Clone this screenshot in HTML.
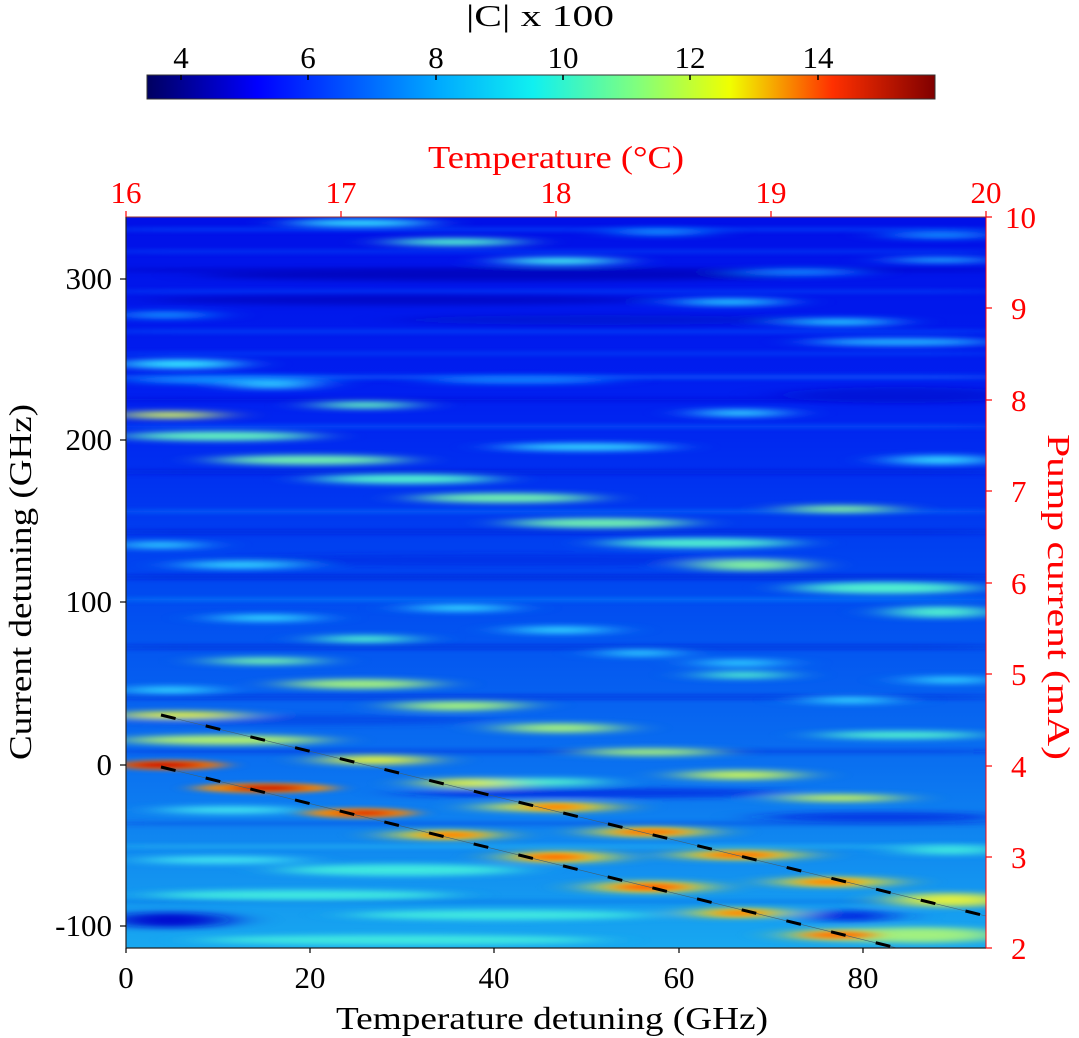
<!DOCTYPE html>
<html><head><meta charset="utf-8"><style>
html,body{margin:0;padding:0;background:#fff;width:1079px;height:1038px;overflow:hidden}
svg{display:block}
text{font-family:"Liberation Serif",serif}
</style></head><body>
<svg width="1079" height="1038" viewBox="0 0 1079 1038" xmlns="http://www.w3.org/2000/svg">
<defs>
<linearGradient id="jet" x1="0" x2="1" y1="0" y2="0">
<stop offset="0" stop-color="#000060"/>
<stop offset="0.14" stop-color="#0000ff"/>
<stop offset="0.37" stop-color="#00aaff"/>
<stop offset="0.49" stop-color="#10f0f0"/>
<stop offset="0.62" stop-color="#7fff7f"/>
<stop offset="0.74" stop-color="#f0ff00"/>
<stop offset="0.87" stop-color="#ff3000"/>
<stop offset="1" stop-color="#800000"/>
</linearGradient>
<linearGradient id="bg" x1="0" x2="0" y1="0" y2="1">
<stop offset="0" stop-color="#0010e8"/>
<stop offset="0.25" stop-color="#0020f0"/>
<stop offset="0.5" stop-color="#0048f0"/>
<stop offset="0.75" stop-color="#0a70f0"/>
<stop offset="1" stop-color="#18a8f0"/>
</linearGradient>
<clipPath id="cp"><rect x="126" y="217" width="860" height="731"/></clipPath>
<filter id="bl" x="-30%" y="-30%" width="160%" height="160%"><feGaussianBlur stdDeviation="24 3"/></filter>
<filter id="bl2" x="-20%" y="-20%" width="140%" height="140%"><feGaussianBlur stdDeviation="12 2"/></filter>
<filter id="bl3" x="-10%" y="-50%" width="120%" height="200%"><feGaussianBlur stdDeviation="40 2"/></filter>
</defs>

<rect x="147" y="75" width="788" height="24" fill="url(#jet)" stroke="#333" stroke-width="1"/>
<g stroke="#000" stroke-width="1.5">
<line x1="181" y1="75" x2="181" y2="80"/><line x1="308" y1="75" x2="308" y2="80"/><line x1="436" y1="75" x2="436" y2="80"/><line x1="563" y1="75" x2="563" y2="80"/><line x1="690" y1="75" x2="690" y2="80"/><line x1="818" y1="75" x2="818" y2="80"/>
</g>
<g font-size="31" text-anchor="middle" fill="#000">
<text x="181" y="68">4</text><text x="308" y="68">6</text><text x="436" y="68">8</text><text x="563" y="68">10</text><text x="690" y="68">12</text><text x="818" y="68">14</text>
<text x="540" y="26" textLength="148" lengthAdjust="spacingAndGlyphs">|C| x 100</text>
</g>

<g clip-path="url(#cp)">
<rect x="126" y="217" width="860" height="731" fill="url(#bg)"/>
<g filter="url(#bl3)">
<rect x="100" y="228" width="900" height="3" fill="#0a60ff" opacity="0.6"/>
<rect x="100" y="250" width="900" height="3" fill="#0a60ff" opacity="0.5"/>
<rect x="100" y="268" width="900" height="4" fill="#000ac0" opacity="0.5"/>
<rect x="100" y="290" width="900" height="3" fill="#0a60ff" opacity="0.5"/>
<rect x="100" y="330" width="900" height="3" fill="#0a60ff" opacity="0.6"/>
<rect x="100" y="352" width="900" height="3" fill="#0a60ff" opacity="0.5"/>
<rect x="100" y="375" width="900" height="4" fill="#1080ff" opacity="0.5"/>
<rect x="100" y="398" width="900" height="3" fill="#0010d0" opacity="0.5"/>
<rect x="100" y="425" width="900" height="3" fill="#1080ff" opacity="0.5"/>
<rect x="100" y="470" width="900" height="4" fill="#0010d0" opacity="0.5"/>
<rect x="100" y="510" width="900" height="3" fill="#1090ff" opacity="0.5"/>
<rect x="100" y="530" width="900" height="4" fill="#0010d0" opacity="0.5"/>
<rect x="100" y="575" width="900" height="4" fill="#0010d0" opacity="0.6"/>
<rect x="100" y="598" width="900" height="3" fill="#10a0ff" opacity="0.5"/>
<rect x="100" y="645" width="900" height="4" fill="#0010d0" opacity="0.5"/>
<rect x="100" y="695" width="900" height="4" fill="#0018d8" opacity="0.5"/>
<rect x="100" y="750" width="900" height="3" fill="#0020e0" opacity="0.6"/>
<rect x="100" y="822" width="900" height="3" fill="#0030e0" opacity="0.5"/>
<rect x="100" y="845" width="900" height="3" fill="#30d0f0" opacity="0.5"/>
<rect x="100" y="900" width="900" height="3" fill="#0060e8" opacity="0.5"/>
</g>
<g filter="url(#bl)">
<ellipse cx="500" cy="275" rx="300" ry="6" fill="#0008b0" opacity="0.7"/>
<ellipse cx="400" cy="300" rx="250" ry="5" fill="#0008b0" opacity="0.6"/>
<ellipse cx="600" cy="320" rx="200" ry="5" fill="#0010c0" opacity="0.5"/>
<ellipse cx="900" cy="395" rx="120" ry="8" fill="#0010d0" opacity="0.7"/>
<ellipse cx="170" cy="920" rx="60" ry="8" fill="#0010d0"/>
<ellipse cx="850" cy="916" rx="40" ry="6" fill="#0020e0"/>
<ellipse cx="600" cy="793" rx="200" ry="5" fill="#0020e0" opacity="0.7"/>
<ellipse cx="880" cy="817" rx="120" ry="5" fill="#0020e0" opacity="0.7"/>
<ellipse cx="500" cy="560" rx="300" ry="6" fill="#0020e0" opacity="0.5"/>
<ellipse cx="300" cy="720" rx="200" ry="5" fill="#0030e0" opacity="0.5"/>
<ellipse cx="360" cy="223" rx="70" ry="4" fill="#30e0ff"/>
<ellipse cx="455" cy="242" rx="66" ry="4" fill="#50f0d0"/>
<ellipse cx="560" cy="261" rx="60" ry="4" fill="#40e8f0"/>
<ellipse cx="660" cy="232" rx="45" ry="4" fill="#1090ff"/>
<ellipse cx="730" cy="302" rx="55" ry="4" fill="#20c0ff"/>
<ellipse cx="840" cy="322" rx="55" ry="4" fill="#20c0ff"/>
<ellipse cx="900" cy="342" rx="90" ry="4" fill="#20b0ff"/>
<ellipse cx="180" cy="364" rx="60" ry="5" fill="#30e0ff"/>
<ellipse cx="165" cy="315" rx="45" ry="4" fill="#1090ff"/>
<ellipse cx="940" cy="235" rx="50" ry="4" fill="#1090ff"/>
<ellipse cx="800" cy="272" rx="60" ry="4" fill="#1080ff"/>
<ellipse cx="230" cy="380" rx="100" ry="4" fill="#1090ff"/>
<ellipse cx="940" cy="260" rx="50" ry="3" fill="#20b0ff"/>
<ellipse cx="520" cy="380" rx="90" ry="4" fill="#1080ff"/>
<ellipse cx="272" cy="385" rx="40" ry="4" fill="#30d0ff"/>
<ellipse cx="365" cy="405" rx="48" ry="4" fill="#60f0c0"/>
<ellipse cx="170" cy="415" rx="50" ry="4" fill="#d0f060"/>
<ellipse cx="220" cy="436" rx="95" ry="5" fill="#60f0c0"/>
<ellipse cx="740" cy="413" rx="45" ry="4" fill="#30d0ff"/>
<ellipse cx="585" cy="447" rx="85" ry="4" fill="#30d0ff"/>
<ellipse cx="310" cy="460" rx="95" ry="5" fill="#70f0b0"/>
<ellipse cx="940" cy="460" rx="50" ry="5" fill="#30d0ff"/>
<ellipse cx="405" cy="479" rx="90" ry="5" fill="#50f0d0"/>
<ellipse cx="505" cy="498" rx="90" ry="5" fill="#70f0b0"/>
<ellipse cx="840" cy="509" rx="55" ry="4" fill="#80f0a0"/>
<ellipse cx="600" cy="523" rx="90" ry="5" fill="#70f0b0"/>
<ellipse cx="700" cy="543" rx="95" ry="5" fill="#50f0d0"/>
<ellipse cx="160" cy="545" rx="40" ry="4" fill="#30d0ff"/>
<ellipse cx="750" cy="565" rx="55" ry="6" fill="#80f0a0"/>
<ellipse cx="240" cy="565" rx="60" ry="4" fill="#30d0ff"/>
<ellipse cx="885" cy="588" rx="90" ry="6" fill="#50f0d0"/>
<ellipse cx="460" cy="608" rx="50" ry="4" fill="#30d0ff"/>
<ellipse cx="940" cy="612" rx="50" ry="6" fill="#50f0d0"/>
<ellipse cx="265" cy="618" rx="52" ry="4" fill="#30d0ff"/>
<ellipse cx="560" cy="630" rx="50" ry="4" fill="#30d0ff"/>
<ellipse cx="365" cy="639" rx="48" ry="4" fill="#50f0d0"/>
<ellipse cx="640" cy="653" rx="35" ry="4" fill="#30d0ff"/>
<ellipse cx="265" cy="661" rx="55" ry="4" fill="#70f0b0"/>
<ellipse cx="740" cy="663" rx="40" ry="4" fill="#30d0ff"/>
<ellipse cx="743" cy="675" rx="42" ry="4" fill="#50f0d0"/>
<ellipse cx="360" cy="684" rx="75" ry="5" fill="#a0f080"/>
<ellipse cx="850" cy="700" rx="45" ry="4" fill="#30d0ff"/>
<ellipse cx="455" cy="707" rx="55" ry="4" fill="#a0f080"/>
<ellipse cx="170" cy="690" rx="45" ry="4" fill="#30d0ff"/>
<ellipse cx="950" cy="680" rx="40" ry="4" fill="#30d0ff"/>
<ellipse cx="180" cy="715" rx="65" ry="4" fill="#e0f040"/>
<ellipse cx="460" cy="705" rx="65" ry="4" fill="#a0f080"/>
<ellipse cx="560" cy="728" rx="60" ry="5" fill="#a0f080"/>
<ellipse cx="225" cy="740" rx="100" ry="5" fill="#b0f070"/>
<ellipse cx="650" cy="752" rx="70" ry="4" fill="#a0f080"/>
<ellipse cx="900" cy="735" rx="80" ry="4" fill="#50f0d0"/>
<ellipse cx="375" cy="760" rx="55" ry="5" fill="#e0f040"/>
<ellipse cx="740" cy="775" rx="60" ry="5" fill="#c0f060"/>
<ellipse cx="475" cy="783" rx="55" ry="5" fill="#e0f040"/>
<ellipse cx="550" cy="782" rx="55" ry="4" fill="#50f0d0"/>
<ellipse cx="840" cy="798" rx="60" ry="4" fill="#c0f060"/>
<ellipse cx="510" cy="807" rx="30" ry="4" fill="#c0f060"/>
<ellipse cx="560" cy="807" rx="55" ry="5" fill="#f0e020"/>
<ellipse cx="445" cy="835" rx="55" ry="5" fill="#f0e020"/>
<ellipse cx="650" cy="832" rx="60" ry="5" fill="#f0e020"/>
<ellipse cx="560" cy="857" rx="55" ry="6" fill="#f0e020"/>
<ellipse cx="740" cy="855" rx="65" ry="5" fill="#f0e020"/>
<ellipse cx="835" cy="882" rx="60" ry="5" fill="#f0e020"/>
<ellipse cx="650" cy="887" rx="60" ry="6" fill="#f0e020"/>
<ellipse cx="740" cy="913" rx="50" ry="5" fill="#f0e020"/>
<ellipse cx="850" cy="935" rx="60" ry="6" fill="#f0e020"/>
<ellipse cx="950" cy="900" rx="60" ry="7" fill="#e0f040"/>
<ellipse cx="920" cy="935" rx="80" ry="8" fill="#a0f080"/>
<ellipse cx="400" cy="870" rx="120" ry="6" fill="#40e8e0"/>
<ellipse cx="300" cy="895" rx="150" ry="5" fill="#40e8e0"/>
<ellipse cx="500" cy="915" rx="150" ry="5" fill="#40e8e0"/>
<ellipse cx="400" cy="940" rx="200" ry="5" fill="#40e8e0"/>
<ellipse cx="950" cy="850" rx="50" ry="5" fill="#40e8e0"/>
<ellipse cx="220" cy="860" rx="80" ry="4" fill="#40e0f0"/>
<ellipse cx="230" cy="810" rx="70" ry="4" fill="#40e0f0"/>
</g>
<g filter="url(#bl2)">
<ellipse cx="170" cy="765" rx="55" ry="5" fill="#ff8000"/>
<ellipse cx="165" cy="765" rx="40" ry="3.5" fill="#d00000"/>
<ellipse cx="265" cy="788" rx="70" ry="5" fill="#ff9000"/>
<ellipse cx="268" cy="788" rx="40" ry="3.5" fill="#d01000"/>
<ellipse cx="360" cy="813" rx="55" ry="5" fill="#ff9000"/>
<ellipse cx="365" cy="813" rx="30" ry="3" fill="#e02000"/>
<ellipse cx="450" cy="835" rx="30" ry="3" fill="#ff8000"/>
<ellipse cx="555" cy="807" rx="28" ry="3" fill="#ff8000"/>
<ellipse cx="650" cy="832" rx="35" ry="3" fill="#ff7000"/>
<ellipse cx="555" cy="857" rx="30" ry="3.5" fill="#ff7000"/>
<ellipse cx="740" cy="855" rx="35" ry="3" fill="#ff7000"/>
<ellipse cx="830" cy="882" rx="30" ry="3" fill="#ff8000"/>
<ellipse cx="650" cy="887" rx="35" ry="3.5" fill="#ff6000"/>
<ellipse cx="740" cy="913" rx="25" ry="3" fill="#ff8000"/>
<ellipse cx="840" cy="935" rx="35" ry="3.5" fill="#ff7000"/>
</g>
<line x1="161" y1="715" x2="986" y2="916" stroke="#406070" stroke-width="0.6"/>
<line x1="161" y1="767" x2="897" y2="948" stroke="#406070" stroke-width="0.6"/>
<line x1="161" y1="715" x2="986" y2="916" stroke="#000" stroke-width="3" stroke-dasharray="15 31"/>
<line x1="161" y1="767" x2="897" y2="948" stroke="#000" stroke-width="3" stroke-dasharray="15 31"/>
</g>

<rect x="126" y="217" width="860" height="731" fill="none" stroke="#555" stroke-width="1"/>
<line x1="126" y1="217" x2="126" y2="948" stroke="#222" stroke-width="1.2"/>
<line x1="126" y1="948" x2="986" y2="948" stroke="#222" stroke-width="1.2"/>
<line x1="986" y1="217" x2="986" y2="948" stroke="#ff0000" stroke-width="1"/>
<line x1="126" y1="217" x2="986" y2="217" stroke="#ff0000" stroke-width="0.8" opacity="0.5"/>

<g stroke="#000" stroke-width="1.2">
<line x1="126" y1="948" x2="126" y2="953"/><line x1="310" y1="948" x2="310" y2="953"/><line x1="494" y1="948" x2="494" y2="953"/><line x1="679" y1="948" x2="679" y2="953"/><line x1="863" y1="948" x2="863" y2="953"/>
<line x1="120" y1="279" x2="126" y2="279"/><line x1="120" y1="440" x2="126" y2="440"/><line x1="120" y1="602" x2="126" y2="602"/><line x1="120" y1="765" x2="126" y2="765"/><line x1="120" y1="926" x2="126" y2="926"/>
</g>
<g stroke="#ff0000" stroke-width="1.2">
<line x1="126" y1="211" x2="126" y2="217"/><line x1="341" y1="211" x2="341" y2="217"/><line x1="556" y1="211" x2="556" y2="217"/><line x1="771" y1="211" x2="771" y2="217"/><line x1="986" y1="211" x2="986" y2="217"/>
<line x1="986" y1="217" x2="992" y2="217"/><line x1="986" y1="308" x2="992" y2="308"/><line x1="986" y1="400" x2="992" y2="400"/><line x1="986" y1="491" x2="992" y2="491"/><line x1="986" y1="583" x2="992" y2="583"/><line x1="986" y1="674" x2="992" y2="674"/><line x1="986" y1="766" x2="992" y2="766"/><line x1="986" y1="857" x2="992" y2="857"/><line x1="986" y1="948" x2="992" y2="948"/>
</g>

<g font-size="31" fill="#000">
<g text-anchor="middle">
<text x="126" y="988">0</text><text x="310" y="988">20</text><text x="494" y="988">40</text><text x="679" y="988">60</text><text x="863" y="988">80</text>
</g>
<g text-anchor="end">
<text x="112" y="289">300</text><text x="112" y="450">200</text><text x="112" y="612">100</text><text x="112" y="775">0</text><text x="112" y="936">-100</text>
</g>
<text x="552" y="1029" font-size="32" text-anchor="middle" textLength="432" lengthAdjust="spacingAndGlyphs">Temperature detuning (GHz)</text>
<text transform="translate(31,582) rotate(-90)" font-size="32" text-anchor="middle" textLength="356" lengthAdjust="spacingAndGlyphs">Current detuning (GHz)</text>
</g>
<g font-size="31" fill="#ff0000">
<g text-anchor="middle">
<text x="126" y="203">16</text><text x="341" y="203">17</text><text x="556" y="203">18</text><text x="771" y="203">19</text><text x="986" y="203">20</text>
</g>
<g>
<text x="1005" y="228">10</text><text x="1011" y="319">9</text><text x="1011" y="411">8</text><text x="1011" y="502">7</text><text x="1011" y="594">6</text><text x="1011" y="685">5</text><text x="1011" y="777">4</text><text x="1011" y="868">3</text><text x="1011" y="959">2</text>
</g>
<text x="556" y="168" font-size="32" text-anchor="middle" textLength="256" lengthAdjust="spacingAndGlyphs">Temperature (°C)</text>
<text transform="translate(1048,597) rotate(90)" font-size="32" text-anchor="middle" textLength="326" lengthAdjust="spacingAndGlyphs">Pump current (mA)</text>
</g>
</svg>
</body></html>
